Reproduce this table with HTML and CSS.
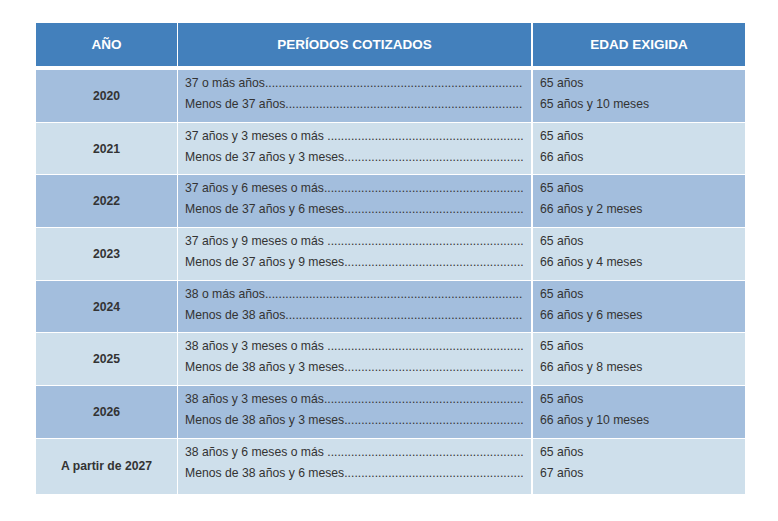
FILE: index.html
```html
<!DOCTYPE html>
<html lang="es">
<head>
<meta charset="utf-8">
<title>Edad de jubilación</title>
<link rel="stylesheet" href="styles.css">
</head>
<body>
<table class="tabla">
  <thead>
    <tr>
      <th class="c-ano">AÑO</th>
      <th class="c-per">PERÍODOS COTIZADOS</th>
      <th class="c-edad">EDAD EXIGIDA</th>
    </tr>
  </thead>
  <tbody>
    <tr class="dark">
      <td class="year">2020</td>
      <td class="per"><div class="ln"><span class="t">37 o más años</span><span class="dots"></span></div><div class="ln"><span class="t">Menos de 37 años</span><span class="dots"></span></div></td>
      <td class="edad"><div class="ln">65 años</div><div class="ln">65 años y 10 meses</div></td>
    </tr>
    <tr class="light">
      <td class="year">2021</td>
      <td class="per"><div class="ln"><span class="t">37 años y 3 meses o más&nbsp;</span><span class="dots"></span></div><div class="ln"><span class="t">Menos de 37 años y 3 meses</span><span class="dots"></span></div></td>
      <td class="edad"><div class="ln">65 años</div><div class="ln">66 años</div></td>
    </tr>
    <tr class="dark">
      <td class="year">2022</td>
      <td class="per"><div class="ln"><span class="t">37 años y 6 meses o más</span><span class="dots"></span></div><div class="ln"><span class="t">Menos de 37 años y 6 meses</span><span class="dots"></span></div></td>
      <td class="edad"><div class="ln">65 años</div><div class="ln">66 años y 2 meses</div></td>
    </tr>
    <tr class="light">
      <td class="year">2023</td>
      <td class="per"><div class="ln"><span class="t">37 años y 9 meses o más&nbsp;</span><span class="dots"></span></div><div class="ln"><span class="t">Menos de 37 años y 9 meses</span><span class="dots"></span></div></td>
      <td class="edad"><div class="ln">65 años</div><div class="ln">66 años y 4 meses</div></td>
    </tr>
    <tr class="dark">
      <td class="year">2024</td>
      <td class="per"><div class="ln"><span class="t">38 o más años</span><span class="dots"></span></div><div class="ln"><span class="t">Menos de 38 años</span><span class="dots"></span></div></td>
      <td class="edad"><div class="ln">65 años</div><div class="ln">66 años y 6 meses</div></td>
    </tr>
    <tr class="light">
      <td class="year">2025</td>
      <td class="per"><div class="ln"><span class="t">38 años y 3 meses o más&nbsp;</span><span class="dots"></span></div><div class="ln"><span class="t">Menos de 38 años y 3 meses</span><span class="dots"></span></div></td>
      <td class="edad"><div class="ln">65 años</div><div class="ln">66 años y 8 meses</div></td>
    </tr>
    <tr class="dark">
      <td class="year">2026</td>
      <td class="per"><div class="ln"><span class="t">38 años y 3 meses o más</span><span class="dots"></span></div><div class="ln"><span class="t">Menos de 38 años y 3 meses</span><span class="dots"></span></div></td>
      <td class="edad"><div class="ln">65 años</div><div class="ln">66 años y 10 meses</div></td>
    </tr>
    <tr class="light last">
      <td class="year">A partir de 2027</td>
      <td class="per"><div class="ln"><span class="t">38 años y 6 meses o más&nbsp;</span><span class="dots"></span></div><div class="ln"><span class="t">Menos de 38 años y 6 meses</span><span class="dots"></span></div></td>
      <td class="edad"><div class="ln">65 años</div><div class="ln">67 años</div></td>
    </tr>
  </tbody>
</table>
</body>
</html>
```
FILE: styles.css
```css
html, body {
  margin: 0;
  padding: 0;
  background: #ffffff;
}
body {
  padding: 23px 0 0 36px;
  font-family: "Liberation Sans", Arial, sans-serif;
  color: #333333;
}
.tabla {
  border-collapse: separate;
  border-spacing: 0;
  width: 709px;
  table-layout: fixed;
}
.c-ano { width: 141px; }
.c-per { width: 353px; }
.c-edad { width: 212px; }
th {
  background: #4380bc;
  color: #ffffff;
  font-size: 13.5px;
  font-weight: bold;
  height: 43px;
  padding: 0;
  text-align: center;
  vertical-align: middle;
  border-bottom: 4px solid #ffffff;
}
th.c-ano, td.year { border-right: 1px solid #ffffff; }
th.c-per, td.per { border-right: 2px solid #ffffff; }
td {
  padding: 0;
  font-size: 12.2px;
  height: 51.7px;
  border-bottom: 1px solid #ffffff;
}
tr.last td { border-bottom: none; height: 54px; }
tr.dark td { background: #a3bedd; }
tr.light td { background: #cedfeb; }
td.year {
  text-align: center;
  vertical-align: middle;
  font-weight: bold;
  font-size: 12.2px;
}
tr.last td.year { padding-bottom: 1px; }
td.per, td.edad {
  vertical-align: top;
  padding-top: 3px;
  padding-bottom: 6px;
  box-sizing: border-box;
}
td.per { padding-left: 7px; padding-right: 8px; }
td.edad { padding-left: 7px; }
.ln {
  line-height: 21px;
  height: 21px;
  white-space: nowrap;
}
td.per .ln {
  display: flex;
  overflow: hidden;
}
.t { flex: none; }
.dots {
  flex: 1 1 auto;
  overflow: hidden;
  min-width: 0;
}
.dots::after {
  content: "..............................................................................................................................................................................................";
  white-space: nowrap;
}
```
